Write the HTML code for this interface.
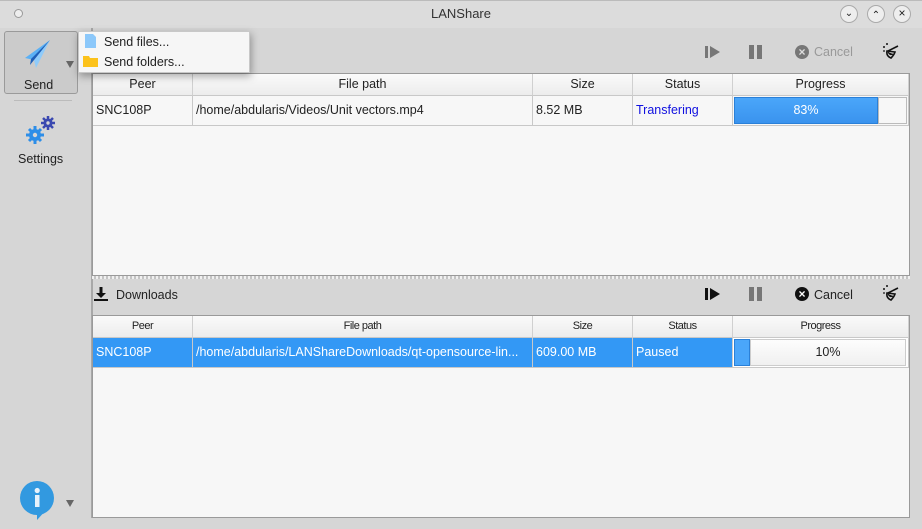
<!DOCTYPE html>
<html><head><meta charset="utf-8"><style>
*{margin:0;padding:0;box-sizing:border-box}
body{width:922px;height:529px;background:#d6d6d6;font-family:"Liberation Sans",sans-serif;font-size:12px;color:#222;position:relative;overflow:hidden}
.a{position:absolute}
.tbl{position:absolute;background:#f7f7f7;border:1px solid #9a9a9a}
.hd{position:absolute;top:0;height:22px;border-right:1px solid #d0d0d0;border-bottom:1px solid #c8c8c8;background:linear-gradient(#fafafa,#ececec);text-align:center;line-height:21px;font-size:12.5px}
.cl{position:absolute;height:30px;border-right:1px solid #c8c8c8;border-bottom:1px solid #c8c8c8;line-height:29px;padding-left:3px;font-size:12.5px;white-space:nowrap;overflow:hidden}
.hd2{font-size:11px;letter-spacing:-0.5px;line-height:21px}
.tb{position:absolute;top:5px;width:18px;height:18px;border:1px solid #aaa;border-radius:50%;background:#eee;text-align:center}
</style></head><body>
<div class="a" style="left:0;top:0;width:922px;height:28px;background:#dcdcdc;border-top:1px solid #bbb"></div>
<div class="a" style="left:14px;top:9px;width:9px;height:9px;border:1px solid #999;border-radius:50%;background:#eee"></div>
<div class="a" style="left:0;top:6px;width:922px;text-align:center;font-size:13px;color:#333">LANShare</div>
<div class="tb" style="left:840px;font-size:10px;line-height:15px">&#8964;</div>
<div class="tb" style="left:867px;font-size:10px;line-height:19px">&#8963;</div>
<div class="tb" style="left:893px;font-size:12px;line-height:15px">×</div>

<div class="a" style="left:91px;top:28px;width:2px;height:490px;background:#a8a8a8"></div>
<div class="a" style="left:4px;top:31px;width:74px;height:63px;border:1px solid #9a9a9a;border-radius:3px;background:#cbcbcb"></div>
<svg class="a" style="left:22px;top:38px" width="32" height="32" viewBox="0 0 32 32"><polygon points="28,2 3,20 12,22" fill="#5ab0f5"/><polygon points="28,2 12,22 14,30" fill="#8fcbfa"/><polygon points="28,2 9,21 8,27" fill="#1e5fb8"/></svg>
<div class="a" style="left:66px;top:61px;width:0;height:0;border-left:4px solid transparent;border-right:4px solid transparent;border-top:7px solid #666"></div>
<div class="a" style="left:24px;top:78px;font-size:12.5px">Send</div>
<div class="a" style="left:14px;top:100px;width:58px;height:1px;background:#bbb"></div>
<svg class="a" style="left:24px;top:114px" width="34" height="32" viewBox="0 0 34 32">
<g fill="#2d8ee8"><circle cx="11" cy="21" r="6"/><g stroke="#2d8ee8" stroke-width="3"><line x1="11" y1="12" x2="11" y2="30"/><line x1="2" y1="21" x2="20" y2="21"/><line x1="5" y1="15" x2="17" y2="27"/><line x1="17" y1="15" x2="5" y2="27"/></g><circle cx="11" cy="21" r="2.2" fill="#d6d6d6"/></g>
<g fill="#3b49b0"><circle cx="24" cy="9" r="4.5"/><g stroke="#3b49b0" stroke-width="2.5"><line x1="24" y1="2" x2="24" y2="16"/><line x1="17" y1="9" x2="31" y2="9"/><line x1="19" y1="4" x2="29" y2="14"/><line x1="29" y1="4" x2="19" y2="14"/></g><circle cx="24" cy="9" r="1.7" fill="#d6d6d6"/></g></svg>
<div class="a" style="left:18px;top:152px;font-size:12.5px">Settings</div>
<svg class="a" style="left:19px;top:481px" width="36" height="40" viewBox="0 0 36 40"><circle cx="18" cy="17" r="17" fill="#3299e0"/><polygon points="18,30 28,28 18,39" fill="#3299e0"/><rect x="16" y="14" width="4.5" height="12" fill="#e8f2fb"/><circle cx="18.2" cy="9.5" r="2.6" fill="#e8f2fb"/></svg>
<div class="a" style="left:66px;top:500px;width:0;height:0;border-left:4px solid transparent;border-right:4px solid transparent;border-top:7px solid #666"></div>

<svg class="a" style="left:704px;top:45px" width="18" height="14"><rect x="1" y="1" width="3" height="12" fill="#777"/><polygon points="6,1 16,7 6,13" fill="#777"/></svg>
<div class="a" style="left:749px;top:45px;width:5px;height:14px;background:#777"></div>
<div class="a" style="left:757px;top:45px;width:5px;height:14px;background:#777"></div>
<div class="a" style="left:795px;top:45px;width:14px;height:14px;border-radius:50%;background:#777;color:#ddd;font-size:12px;font-weight:bold;text-align:center;line-height:14px">×</div>
<div class="a" style="left:814px;top:45px;font-size:12.5px;color:#999">Cancel</div>
<svg class="a" style="left:882px;top:42px" width="18" height="18" viewBox="0 0 18 18"><path d="M6 9 L16 4 M5 9 Q4 14 9 16 Q12 13 13 10 Z" fill="none" stroke="#111" stroke-width="1.6"/><path d="M6 10 Q8 14 11 12" stroke="#111" fill="#111"/><circle cx="2" cy="5" r="1" fill="#111"/><circle cx="5" cy="2" r="1" fill="#111"/><circle cx="2" cy="9" r="0.9" fill="#111"/></svg>

<div class="tbl" style="left:92px;top:73px;width:818px;height:203px">
<div class="hd" style="left:0;width:100px">Peer</div>
<div class="hd" style="left:100px;width:340px">File path</div>
<div class="hd" style="left:440px;width:100px">Size</div>
<div class="hd" style="left:540px;width:100px">Status</div>
<div class="hd" style="left:640px;width:176px">Progress</div>
<div class="cl" style="left:0;top:22px;width:100px">SNC108P</div>
<div class="cl" style="left:100px;top:22px;width:340px">/home/abdularis/Videos/Unit vectors.mp4</div>
<div class="cl" style="left:440px;top:22px;width:100px">8.52 MB</div>
<div class="cl" style="left:540px;top:22px;width:100px;color:#1010e0">Transfering</div>
<div class="cl" style="left:640px;top:22px;width:176px;padding:1px">
<div style="position:absolute;left:1px;top:1px;width:144px;height:27px;background:linear-gradient(#4aa6fa,#3a93ee);border:1px solid #2a80d8;color:#fff;text-align:center;line-height:25px">83%</div>
<div style="position:absolute;left:145px;top:1px;width:29px;height:27px;background:#f7f7f7;border:1px solid #bbb"></div></div>
</div>
<div class="a" style="left:92px;top:276px;width:818px;height:3px;background:repeating-linear-gradient(90deg,#f0f0f0 0 2px,#c4c4c4 2px 4px)"></div>

<svg class="a" style="left:94px;top:287px" width="14" height="14"><rect x="5.5" y="0" width="3" height="7" fill="#111"/><polygon points="2,6 12,6 7,11" fill="#111"/><rect x="0" y="12" width="14" height="2" fill="#111"/></svg>
<div class="a" style="left:116px;top:288px;font-size:12.5px">Downloads</div>
<svg class="a" style="left:704px;top:287px" width="18" height="14"><rect x="1" y="1" width="3" height="12" fill="#111"/><polygon points="6,1 16,7 6,13" fill="#111"/></svg>
<div class="a" style="left:749px;top:287px;width:5px;height:14px;background:#777"></div>
<div class="a" style="left:757px;top:287px;width:5px;height:14px;background:#777"></div>
<div class="a" style="left:795px;top:287px;width:14px;height:14px;border-radius:50%;background:#111;color:#fff;font-size:12px;font-weight:bold;text-align:center;line-height:14px">×</div>
<div class="a" style="left:814px;top:288px;font-size:12.5px">Cancel</div>
<svg class="a" style="left:882px;top:284px" width="18" height="18" viewBox="0 0 18 18"><path d="M6 9 L16 4 M5 9 Q4 14 9 16 Q12 13 13 10 Z" fill="none" stroke="#111" stroke-width="1.6"/><path d="M6 10 Q8 14 11 12" stroke="#111" fill="#111"/><circle cx="2" cy="5" r="1" fill="#111"/><circle cx="5" cy="2" r="1" fill="#111"/><circle cx="2" cy="9" r="0.9" fill="#111"/></svg>

<div class="tbl" style="left:92px;top:315px;width:818px;height:203px">
<div class="hd hd2" style="left:0;width:100px">Peer</div>
<div class="hd hd2" style="left:100px;width:340px">File path</div>
<div class="hd hd2" style="left:440px;width:100px">Size</div>
<div class="hd hd2" style="left:540px;width:100px">Status</div>
<div class="hd hd2" style="left:640px;width:176px">Progress</div>
<div class="cl" style="left:0;top:22px;width:100px;background:#3398f5;color:#fff">SNC108P</div>
<div class="cl" style="left:100px;top:22px;width:340px;background:#3398f5;color:#fff">/home/abdularis/LANShareDownloads/qt-opensource-lin...</div>
<div class="cl" style="left:440px;top:22px;width:100px;background:#3398f5;color:#fff">609.00 MB</div>
<div class="cl" style="left:540px;top:22px;width:100px;background:#3398f5;color:#fff">Paused</div>
<div class="cl" style="left:640px;top:22px;width:176px;background:#fff">
<div style="position:absolute;left:1px;top:1px;width:16px;height:27px;background:#4aa6fa;border:1px solid #2a80d8"></div>
<div style="position:absolute;left:17px;top:1px;width:156px;height:27px;background:linear-gradient(#fdfdfd,#f0f0f0);border:1px solid #ccc;text-align:center;line-height:25px;color:#222">10%</div></div>
</div>

<div class="a" style="left:78px;top:31px;width:172px;height:42px;background:#f6f6f6;border:1px solid #c8c8c8;box-shadow:1px 3px 8px rgba(0,0,0,0.35)"></div>
<svg class="a" style="left:85px;top:34px" width="12" height="14"><path d="M0 0 H8 L11 3 V14 H0 Z" fill="#8cc8fa"/></svg>
<div class="a" style="left:104px;top:35px;font-size:12.5px">Send files...</div>
<svg class="a" style="left:83px;top:55px" width="16" height="13"><path d="M0 1 H6 L7 3 H15 V12 H0 Z" fill="#fcc21b"/></svg>
<div class="a" style="left:104px;top:55px;font-size:12.5px">Send folders...</div>
</body></html>
